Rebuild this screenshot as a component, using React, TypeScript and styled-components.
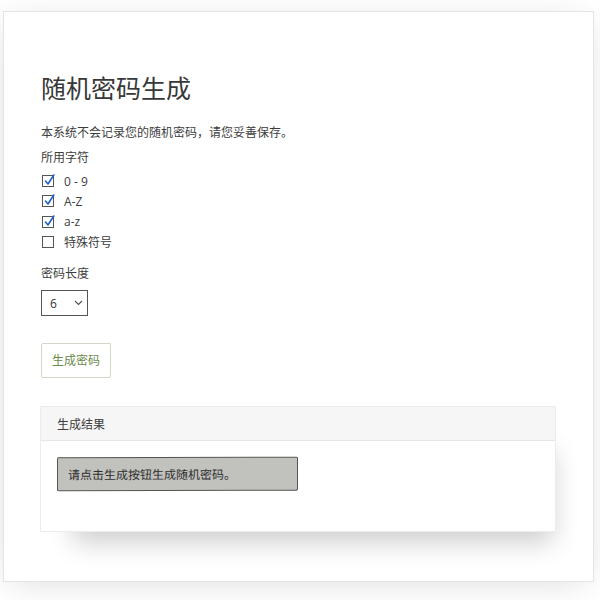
import styled, { createGlobalStyle } from "styled-components";

const GlobalStyle = createGlobalStyle`
  html, body {
    margin: 0;
    padding: 0;
    background: #ffffff;
  }

  body {
    font-family: "Open Sans", "Noto Sans CJK SC", sans-serif;
    color: #3d3d3d;
  }
`;

const PageWrapper = styled.div`
  padding: 11px 6px 19px 3px;
`;

const Paper = styled.main`
  border: 1px solid #e4e4e4;
  background: #ffffff;
  box-shadow: -1px 5px 35px -9px rgba(0, 0, 0, 0.18);
  padding: 61px 37px 49px 37px;
`;

const Title = styled.h1`
  margin: 0 0 20px 0;
  font-size: 25px;
  line-height: 30px;
  font-weight: 400;
  color: #383838;
`;

const Note = styled.p`
  margin: 0;
  font-size: 12px;
  line-height: 20px;
`;

const FieldLabel = styled.div<{ $gap: number }>`
  margin-top: ${({ $gap }) => $gap}px;
  font-size: 12px;
  line-height: 20px;
`;

const OptionList = styled.div`
  display: flex;
  flex-direction: column;
  margin-top: 3px;
`;

const OptionRow = styled.label`
  display: flex;
  align-items: center;
  height: 20.3px;
  font-size: 12px;
  gap: 10px;
`;

const CheckBox = styled.span`
  width: 10px;
  height: 10px;
  margin-left: 1px;
  border: 1px solid #555555;
  position: relative;

  svg {
    position: absolute;
    left: 1px;
    top: -2px;
  }
`;

const SelectBox = styled.div`
  margin-top: 6px;
  height: 24px;
  width: 33px;
  border: 1px solid #555555;
  display: flex;
  align-items: center;
  justify-content: space-between;
  padding: 0 4px 0 8px;
  font-size: 12px;
  color: #333333;
`;

const GenerateButton = styled.button`
  margin-top: 27px;
  display: block;
  font-family: inherit;
  font-size: 12px;
  line-height: 20px;
  color: #6b8a4b;
  background: #ffffff;
  border: 1px solid #d0d8c6;
  border-radius: 2px 1px 2px 1px;
  padding: 6px 9px;
  width: 70px;
  height: 35px;
  box-shadow: 15px 28px 25px -18px rgba(0, 0, 0, 0.22);
  cursor: pointer;
`;

const ResultCard = styled.section`
  margin-top: 28px;
  margin-left: -1px;
  border: 1px solid #ececec;
  background: #ffffff;
  box-shadow: 15px 28px 25px -18px rgba(0, 0, 0, 0.2);
`;

const CardHeader = styled.div`
  height: 33px;
  background: #f6f6f6;
  border-bottom: 1px solid #e6e6e6;
  display: flex;
  align-items: center;
  padding-left: 16px;
  font-size: 12px;
`;

const CardBody = styled.div`
  padding: 16px 16px 40px 16px;
`;

const ResultBox = styled.div`
  width: 229px;
  height: 32px;
  background: #c1c1bd;
  border: 1px solid #555555;
  border-radius: 1px 2px 3px 2px / 3px 1px 2px 1px;
  transform: skewY(-0.15deg);
  display: flex;
  align-items: center;
  padding-left: 10px;
  font-size: 12px;
  color: #2e2e2e;
`;

const options = [
  { label: "0 - 9", checked: true },
  { label: "A-Z", checked: true },
  { label: "a-z", checked: true },
  { label: "特殊符号", checked: false },
];

const CheckMark = () => (
  <svg width="11" height="12" viewBox="0 0 11 12">
    <path d="M1.5 7 L4 10 L9.8 1" fill="none" stroke="#1d62c4" strokeWidth="1.6" strokeLinecap="round" strokeLinejoin="round" />
  </svg>
);

const Chevron = () => (
  <svg width="9" height="6" viewBox="0 0 9 6">
    <path d="M1 1 L4.5 4.5 L8 1" fill="none" stroke="#555" strokeWidth="1.2" />
  </svg>
);

const App = () => {
  return (
    <PageWrapper>
      <GlobalStyle />
      <Paper>
        <Title>随机密码生成</Title>
        <Note>本系统不会记录您的随机密码，请您妥善保存。</Note>
        <FieldLabel $gap={5}>所用字符</FieldLabel>
        <OptionList>
          {options.map((o) => (
            <OptionRow key={o.label}>
              <CheckBox>{o.checked && <CheckMark />}</CheckBox>
              {o.label}
            </OptionRow>
          ))}
        </OptionList>
        <FieldLabel $gap={12}>密码长度</FieldLabel>
        <SelectBox>
          <span>6</span>
          <Chevron />
        </SelectBox>
        <GenerateButton>生成密码</GenerateButton>
        <ResultCard>
          <CardHeader>生成结果</CardHeader>
          <CardBody>
            <ResultBox>请点击生成按钮生成随机密码。</ResultBox>
          </CardBody>
        </ResultCard>
      </Paper>
    </PageWrapper>
  );
};

export default App;
